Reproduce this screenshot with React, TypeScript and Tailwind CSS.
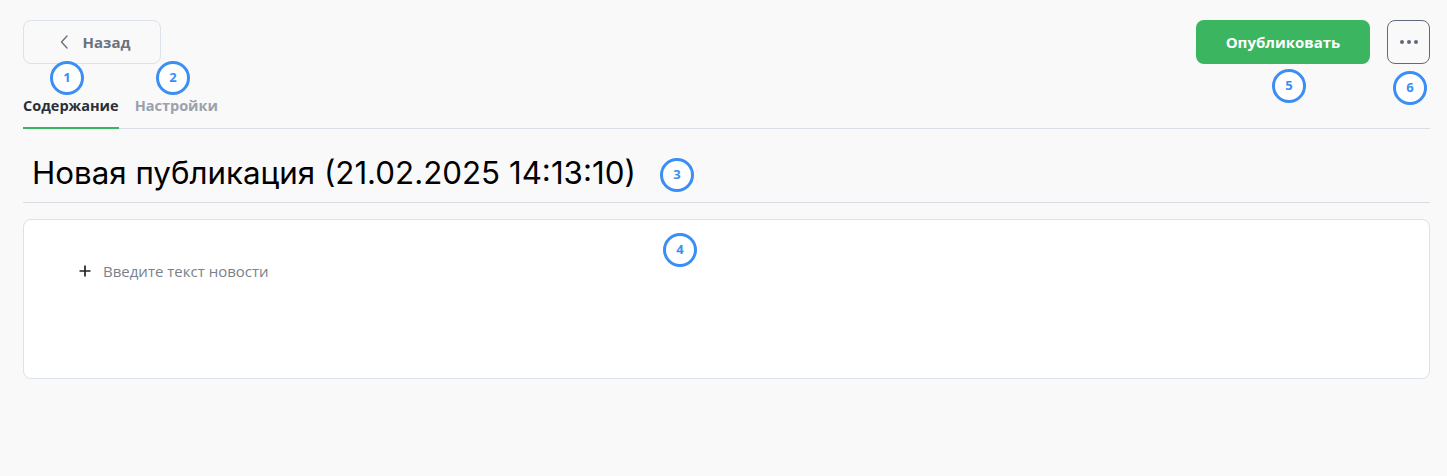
import React from 'react'

const Marker = ({n, className}: {n: number; className: string}) => (
  <div className={`absolute flex h-[34px] w-[34px] items-center justify-center rounded-full border-[3px] border-[#3b8ef3] bg-white text-[13px] font-bold text-[#3b8ef3] ${className}`}>
    {n}
  </div>
)

const App = () => {
  return (
    <main className="relative h-[476px] w-full bg-[#f9f9fa] pl-[23px] pr-[17px] pt-5 font-['Open_Sans',sans-serif]">
      <header className="flex items-start justify-between">
        <div className="flex flex-col">
          <button className="flex h-[44px] w-[138px] items-center justify-center gap-[14px] rounded-lg border border-[#dbe2ec] bg-[#f9f9fa] pl-[6px] text-[15px] font-bold text-[#6b7280]">
            <svg width="9" height="14" viewBox="0 0 9 14" fill="none">
              <path d="M7 1L1.5 7L7 13" stroke="#6b7280" strokeWidth="1.4" strokeLinecap="round" strokeLinejoin="round" />
            </svg>
            <span>Назад</span>
          </button>
          <nav className="mt-[32px] flex gap-4 text-[14.5px] font-bold">
            <div className="flex flex-col">
              <span className="leading-[19px] text-[#2b2f36]">Содержание</span>
              <div className="mt-[12px] h-[2px] bg-[#39b55f]" />
            </div>
            <span className="leading-[19px] text-[#9aa1ad]">Настройки</span>
          </nav>
        </div>
        <div className="flex gap-[17px]">
          <button className="h-[44px] w-[174px] rounded-lg bg-[#3bb560] text-[15px] font-bold text-white">
            Опубликовать
          </button>
          <button className="flex h-[44px] w-[43px] items-center justify-center gap-[3px] rounded-lg border border-[#5f6b7c]">
            <span className="h-[4px] w-[4px] rounded-full bg-[#5f6b7c]" />
            <span className="h-[4px] w-[4px] rounded-full bg-[#5f6b7c]" />
            <span className="h-[4px] w-[4px] rounded-full bg-[#5f6b7c]" />
          </button>
        </div>
      </header>
      <div className="-mt-[1px] h-px bg-[#d9dee6]" />

      <div className="border-b border-[#d9dee6] pb-[10px] pl-[9px] pt-[25px]">
        <h1 className="font-['Inter',sans-serif] text-[31.3px] leading-[38px] text-black">
          Новая публикация (21.02.2025 14:13:10)
        </h1>
      </div>

      <section className="mt-4 h-[160px] rounded-lg border border-[#dbe2ec] bg-white pl-[55px] pt-[40px]">
        <div className="flex items-center gap-[12px]">
          <svg width="12" height="12" viewBox="0 0 12 12">
            <path d="M6 0.5V11.5M0.5 6H11.5" stroke="#1f2329" strokeWidth="1.7" />
          </svg>
          <span className="text-[15px] text-[#7a818c]">Введите текст новости</span>
        </div>
      </section>

      <Marker n={1} className="left-[50px] top-[61px]" />
      <Marker n={2} className="left-[156px] top-[61px]" />
      <Marker n={3} className="left-[660px] top-[158px]" />
      <Marker n={4} className="left-[663px] top-[233px]" />
      <Marker n={5} className="left-[1272px] top-[69px]" />
      <Marker n={6} className="left-[1393px] top-[71px]" />
    </main>
  )
}

export default App
